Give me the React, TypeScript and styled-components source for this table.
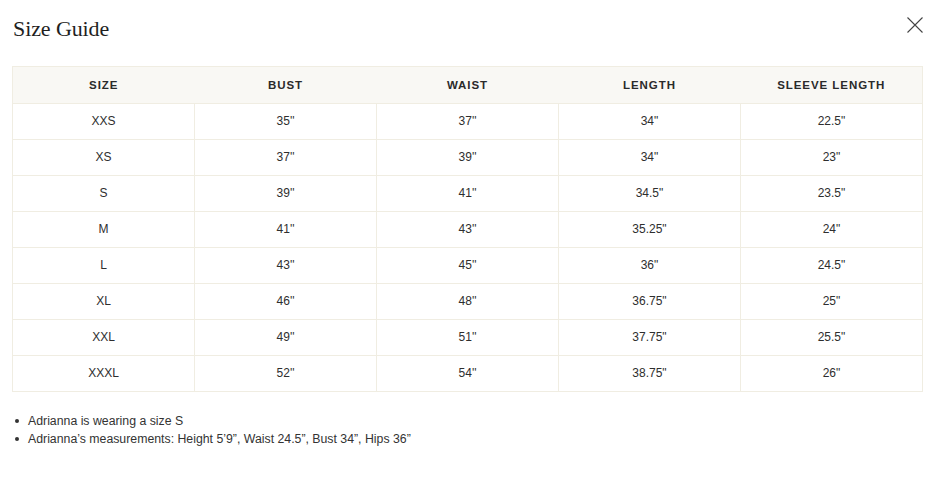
import React from "react";
import styled, { createGlobalStyle } from "styled-components";

const Global = createGlobalStyle`
  html, body { margin: 0; padding: 0; background: #fff; }
  body { font-family: "Liberation Sans", Arial, sans-serif; color: #222; }
`;

const Page = styled.div`
  width: 932px;
  height: 482px;
  box-sizing: border-box;
  padding: 12px 8px 0 12px;
`;

const Header = styled.div`
  display: flex;
  justify-content: space-between;
  align-items: flex-start;
  height: 54px;
`;

const Title = styled.h2`
  margin: 3px 0 0 1px;
  font-family: "Liberation Serif", "Times New Roman", serif;
  font-weight: 400;
  font-size: 22px;
  letter-spacing: -0.1px;
  color: #1f1f1f;
  line-height: 28px;
`;

const Close = styled.button`
  border: 0;
  background: none;
  padding: 0;
  margin: 4px 0 0 0;
  width: 18px;
  height: 18px;
  cursor: pointer;
  display: flex;
`;

const Table = styled.table`
  width: 911px;
  border-collapse: collapse;
  table-layout: fixed;
  border: 1px solid #f0ede2;
`;

const Th = styled.th`
  background: #f9f8f4;
  height: 36px;
  padding: 0;
  font-size: 11.5px;
  font-weight: 700;
  letter-spacing: 0.95px;
  color: #2a2a2a;
  text-align: center;
  vertical-align: middle;
`;

const Td = styled.td`
  height: 34px;
  padding: 0 0 1px 0;
  font-size: 12px;
  color: #2e2e2e;
  text-align: center;
  vertical-align: middle;
  border: 1px solid #f0ede2;
`;

const Notes = styled.ul`
  margin: 20px 0 0 0;
  padding: 0 0 0 3px;
  list-style: none;
  font-size: 12.3px;
  color: #333;
  line-height: 18px;
`;

const Note = styled.li`
  display: flex;
  align-items: center;
  &::before {
    content: "";
    width: 4px;
    height: 4px;
    border-radius: 50%;
    background: #333;
    margin-right: 9px;
    flex: none;
  }
`;

const headers = ["SIZE", "BUST", "WAIST", "LENGTH", "SLEEVE LENGTH"];
const rows: string[][] = [
  ["XXS", "35''", "37''", "34\"", "22.5\""],
  ["XS", "37''", "39''", "34\"", "23\""],
  ["S", "39''", "41''", "34.5\"", "23.5\""],
  ["M", "41''", "43''", "35.25\"", "24\""],
  ["L", "43''", "45''", "36\"", "24.5\""],
  ["XL", "46''", "48''", "36.75\"", "25\""],
  ["XXL", "49''", "51''", "37.75\"", "25.5\""],
  ["XXXL", "52''", "54''", "38.75\"", "26\""],
];

export default function App() {
  return (
    <Page>
      <Global />
      <Header>
        <Title>Size Guide</Title>
        <Close aria-label="Close">
          <svg width="18" height="18" viewBox="0 0 18 18">
            <path d="M1.5 1.5 L16.5 16.5 M16.5 1.5 L1.5 16.5" stroke="#444" strokeWidth="1.1" fill="none" />
          </svg>
        </Close>
      </Header>
      <Table>
        <thead>
          <tr>
            {headers.map((h) => (
              <Th key={h}>{h}</Th>
            ))}
          </tr>
        </thead>
        <tbody>
          {rows.map((r) => (
            <tr key={r[0]}>
              {r.map((c, i) => (
                <Td key={i}>{c}</Td>
              ))}
            </tr>
          ))}
        </tbody>
      </Table>
      <Notes>
        <Note>Adrianna is wearing a size S</Note>
        <Note>Adrianna’s measurements: Height 5’9”, Waist 24.5”, Bust 34”, Hips 36”</Note>
      </Notes>
    </Page>
  );
}
